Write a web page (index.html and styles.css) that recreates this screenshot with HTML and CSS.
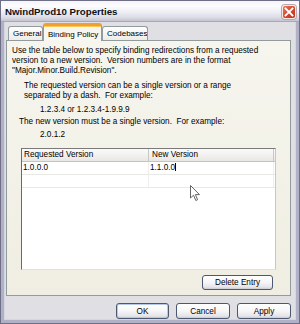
FILE: index.html
```html
<!DOCTYPE html>
<html>
<head>
<meta charset="utf-8">
<link rel="stylesheet" href="styles.css">
</head>
<body>
<div class="window">
  <div class="titlebar">
    <span class="title">NwindProd10 Properties</span>
    <span class="close">
      <svg width="10" height="10" viewBox="0 0 10 10"><path d="M1.5 1.5 L8.5 8.5 M8.5 1.5 L1.5 8.5" stroke="#fff" stroke-width="1.8" stroke-linecap="square"/></svg>
    </span>
  </div>
  <div class="client">
    <div class="tabs">
      <div class="tab t-general">General</div>
      <div class="tab active t-binding">Binding Policy</div>
      <div class="tab t-code">Codebases</div>
    </div>
    <div class="panel">
      <p class="intro">Use the table below to specify binding redirections from a requested<br>version to a new version.&nbsp; Version numbers are in the format<br>"Major.Minor.Build.Revision".</p>
      <p class="note">The requested version can be a single version or a range<br>separated by a dash.&nbsp; For example:</p>
      <p class="example">1.2.3.4 or 1.2.3.4-1.9.9.9</p>
      <p class="note2">The new version must be a single version.&nbsp; For example:</p>
      <p class="example ex2">2.0.1.2</p>
      <div class="grid">
        <div class="row head"><div class="c1">Requested Version</div><div class="c2">New Version</div></div>
        <div class="row"><div class="c1">1.0.0.0</div><div class="c2">1.1.0.0<span class="caret"></span></div></div>
        <div class="row"><div class="c1"></div><div class="c2"></div></div>
        <svg class="cursor" width="11" height="17" viewBox="0 0 11 17"><path d="M0.5 0.5 L0.5 13 L3.5 10.2 L5.8 15.5 L7.6 14.7 L5.4 9.6 L9.5 9.6 Z" fill="#fff" stroke="#555" stroke-width="0.9" stroke-linejoin="round"/></svg>
      </div>
      <div class="panel-actions"><button class="btn del">Delete Entry</button></div>
    </div>
    <div class="actions">
      <button class="btn default">OK</button>
      <button class="btn">Cancel</button>
      <button class="btn">Apply</button>
    </div>
  </div>
</div>
</body>
</html>
```
FILE: styles.css
```css
* { box-sizing: border-box; }
html, body { margin: 0; padding: 0; }
body {
  width: 300px;
  height: 324px;
  overflow: hidden;
  font-family: "Liberation Sans", Arial, sans-serif;
  font-size: 8.2px;
  color: #000;
  background: #fff;
}
.window {
  width: 300px;
  height: 324px;
  display: flex;
  flex-direction: column;
  border: 1px solid #6e6e86;
  background: #e0dfe3;
}
.titlebar {
  height: 21px;
  display: flex;
  align-items: center;
  justify-content: space-between;
  padding: 0 3px 0 4px;
  background: linear-gradient(#f4f4f8 0%, #fdfdff 25%, #eeeef4 55%, #dcdce6 82%, #c4c4d2 100%);
  border-bottom: 1px solid #a8a8bc;
}
.title {
  font-weight: bold;
  font-size: 9.7px;
  color: #101018;
  padding-top: 1px;
}
.close {
  width: 14px;
  height: 14px;
  display: flex;
  align-items: center;
  justify-content: center;
  border: 1px solid #f4e8e4;
  border-radius: 3px;
  background: linear-gradient(135deg, #ea7a62 0%, #d4462c 55%, #c2321c 100%);
  box-shadow: 0 0 0 1px #b8a8b0;
  margin-top: 1px;
}
.client {
  flex: 1;
  display: flex;
  flex-direction: column;
  padding: 0 5px 1px 2px;
  border: solid #b0b0c6;
  border-width: 0 3px 3px 3px;
  box-shadow: inset 1px 0 #d6d6e0, inset -1px 0 #d6d6e0, inset 0 -1px #d6d6e0;
}
.tabs {
  height: 18px;
  display: flex;
  align-items: flex-end;
  padding: 1px 0 0 2px;
}
.tab {
  height: 14px;
  display: flex;
  align-items: center;
  padding: 0 0 0 4px;
  font-size: 8px;
  border: 1px solid #919b9c;
  border-bottom: none;
  border-radius: 3px 3px 0 0;
  background: linear-gradient(#ffffff, #ecebe6);
  white-space: nowrap;
  overflow: hidden;
}
.t-general { width: 35px; }
.t-code { width: 46px; padding-left: 4px; }
.tab.active {
  width: 59px;
  height: 18px;
  margin-bottom: -1px;
  z-index: 2;
  padding-left: 4px;
  padding-top: 1px;
  background: #f7f6f0;
  border-top: 3px solid #f0a030;
  box-shadow: inset 0 1px 0 #ffc850;
}
.panel {
  height: 256px;
  border: 1px solid #919b9c;
  background: linear-gradient(#f6f5ee, #f0eee2);
  padding: 5px 5px 5px 5px;
  display: flex;
  flex-direction: column;
}
.panel p {
  margin: 0;
  line-height: 10px;
  white-space: nowrap;
}
.note { margin-top: 5px !important; padding-left: 12px; }
.example { margin-top: 4px !important; padding-left: 28px; }
.note2 { margin-top: 2px !important; padding-left: 7px; }
.ex2 { margin-top: 3px !important; }
.grid {
  position: relative;
  margin: 8px 0 0 9px;
  width: 255px;
  height: 122px;
  background: #fff;
  border-left: 1px solid #6a6a6a;
  border-top: 1px solid #7a7a7a;
  border-right: 1px solid #c8c8c0;
  border-bottom: 1px solid #e4e2d8;
}
.row {
  display: flex;
  height: 13px;
  border-bottom: 1px solid #e8e8e4;
}
.row .c1, .row .c2 {
  line-height: 12px;
  padding-left: 1px;
  border-right: 1px solid #efefec;
  white-space: nowrap;
}
.c1 { width: 127px; }
.c2 { width: 125px; }
.row.head {
  height: 13px;
  background: linear-gradient(#fbfbfb, #e8e7e4);
  border-bottom: 1px solid #c5c5c0;
}
.row.head .c1, .row.head .c2 {
  border-right: 1px solid #c8c8c4;
  padding-left: 2px;
}
.row.head .c2 { padding-left: 3px; }
.caret {
  display: inline-block;
  width: 1px;
  height: 8px;
  background: #000;
  vertical-align: -1px;
}
.cursor {
  position: absolute;
  left: 168px;
  top: 36px;
}
.panel-actions {
  margin-top: 5px;
  display: flex;
  justify-content: flex-end;
  padding-right: 12px;
}
.btn {
  font-family: "Liberation Sans", Arial, sans-serif;
  font-size: 8.2px;
  color: #000;
  height: 16px;
  padding: 0;
  border: 1px solid #4c5870;
  border-radius: 3px;
  background: linear-gradient(#ffffff 0%, #f6f6f8 50%, #e4e4ea 85%, #cfcfd8 100%);
  box-shadow: inset 0 -1px 0 #d0d0d8;
}
.btn.del { width: 71px; height: 15px; }
.actions {
  display: flex;
  justify-content: flex-end;
  gap: 7px;
  padding-top: 7px;
}
.actions .btn { width: 54px; }
.btn.default {
  width: 53px;
  box-shadow: inset 0 0 0 1px #b8c8e8, inset 0 -1px 0 #a8b8dc;
}
```
